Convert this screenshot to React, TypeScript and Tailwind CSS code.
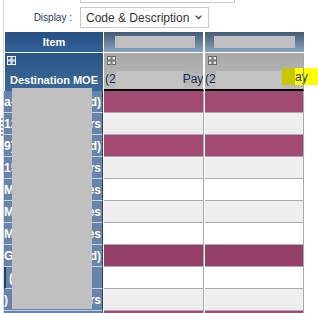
import React from 'react';

type BodyRow = { left: string; right: string; bg: string; indent?: boolean };

const ROWS: BodyRow[] = [
  { left: 'a–', right: 'd)', bg: 'bg-[#a34a73]' },
  { left: '12', right: 'rs', bg: 'bg-[#eeeeee]' },
  { left: '9)', right: 'd)', bg: 'bg-[#a34a73]' },
  { left: '15', right: 'rs', bg: 'bg-[#eeeeee]' },
  { left: 'Ma', right: 'es', bg: 'bg-white' },
  { left: 'Ma', right: 'es', bg: 'bg-[#eeeeee]' },
  { left: 'Ma', right: 'es', bg: 'bg-white' },
  { left: 'Gl', right: 'd)', bg: 'bg-[#933f68]' },
  { left: '(', right: '', bg: 'bg-white', indent: true },
  { left: ')', right: 'rs', bg: 'bg-[#eeeeee]' },
  { left: '', right: '', bg: 'bg-[#a34a73]' },
];

const GridIcon = ({ light }: { light?: boolean }) => (
  <svg width="9" height="9" viewBox="0 0 9 9" className="block">
    {[
      [0.5, 0.5],
      [5, 0.5],
      [0.5, 5],
      [5, 5],
    ].map(([x, y], i) => (
      <rect
        key={i}
        x={x}
        y={y}
        width="3.5"
        height="3.5"
        fill={light ? 'none' : '#e6e6e6'}
        stroke={light ? '#ffffff' : '#6b6b6b'}
        strokeWidth="1"
      />
    ))}
  </svg>
);

export default function App() {
  return (
    <div className="relative w-[318px] h-[313px] overflow-hidden bg-white font-['Liberation_Sans',Arial,sans-serif]">
      <div className="ml-[3px] border-l border-[#d6d6d6] h-full">
        {/* cut-off search input */}
        <div className="ml-[76px] w-[155px] h-[3px] border-x border-b border-[#cccccc]" />

        {/* display selector */}
        <div className="mt-[4px] flex items-center h-[21px]">
          <div className="w-[76px] pr-[8px] text-right text-[10px] text-[#1f3657]">Display :</div>
          <div className="w-[129px] h-[21px] border border-[#c8c8c8] flex items-center pl-[5px] pr-[6px] text-[12px] text-[#333333]">
            <span className="flex-1">Code &amp; Description</span>
            <svg width="7" height="5" viewBox="0 0 7 5">
              <path d="M0.8 0.8 L3.5 3.6 L6.2 0.8" fill="none" stroke="#555555" strokeWidth="1.6" />
            </svg>
          </div>
        </div>

        {/* table */}
        <div className="relative mt-[4px] ml-[1px] w-[299px]">
          <div className="flex gap-[1px] h-[20px]">
            <div className="w-[98px] bg-gradient-to-b from-[#274f82] to-[#33619a] text-white font-bold text-[11px] flex items-center justify-center">
              Item
            </div>
            <div className="w-[100px] border-r border-white bg-gradient-to-b from-[#435b74] to-[#8aa4c0] pt-[4px] pl-[11px]">
              <div className="w-[80px] h-[12px] bg-[#c0c0c0]" />
            </div>
            <div className="w-[99px] bg-gradient-to-b from-[#435b74] to-[#8aa4c0] pt-[4px] pl-[9px]">
              <div className="w-[81px] h-[12px] bg-[#c0c0c0]" />
            </div>
          </div>

          <div className="flex gap-[1px] mt-[1px]">
            <div className="w-[98px] h-[38px] bg-gradient-to-b from-[#2a5587] to-[#3a6799] pt-[3px] pl-[2px] flex flex-col">
              <GridIcon light />
              <div className="mt-[8px] pl-[3px] text-white font-bold text-[11px] leading-[14px]">Destination MOE</div>
            </div>
            <div className="w-[100px] h-[38px] border-r border-white border-b-2 border-b-black bg-gradient-to-b from-[#a8a8a8] to-[#bcbcbc] pt-[3px] pl-[3px] flex flex-col overflow-hidden">
              <GridIcon />
              <div className="mt-[5px] -ml-[2px] flex items-center h-[18px] text-[12px] text-[#1c2d4a] whitespace-nowrap">
                <span className="shrink-0">(2</span>
                <div className="shrink-0 w-[67px] h-[17px] bg-[#c3c3c3]" />
                <span className="shrink-0">Pay</span>
              </div>
            </div>
            <div className="w-[99px] h-[38px] border-r border-[#a8a8a8] border-b-2 border-b-black bg-gradient-to-b from-[#a8a8a8] to-[#bcbcbc] pt-[3px] pl-[3px] flex flex-col overflow-hidden">
              <GridIcon />
              <div className="mt-[5px] -ml-[3px] flex items-center h-[18px] text-[12px] text-[#1c2d4a] whitespace-nowrap">
                <span className="shrink-0">(2</span>
                <div className="shrink-0 w-[67px] h-[17px] bg-[#c3c3c3]" />
              </div>
            </div>
          </div>

          {ROWS.map((row, i) => (
            <div key={i} className="flex gap-[1px]">
              <div
                className={`-ml-[1px] w-[99px] h-[22px] bg-[#6785aa] border-b border-[#c5d2e0] border-r border-r-[#24466e] flex items-center justify-between pr-[1px] text-white font-bold text-[12px] overflow-hidden ${
                  row.indent ? 'border-l-2 border-l-[#21406a] pl-[3px]' : ''
                }`}
              >
                <span>{row.left}</span>
                <span>{row.right}</span>
              </div>
              <div className={`w-[100px] h-[22px] ${row.bg} border-b border-b-[#aaaaaa] border-r border-r-[#aaaaaa]`} />
              <div className={`w-[99px] h-[22px] ${row.bg} border-b border-b-[#aaaaaa] border-r border-r-[#aaaaaa]`} />
            </div>
          ))}

          {/* redaction over item names */}
          <div className="absolute left-[7px] top-[56px] w-[80px] h-[221px] bg-[#c0c0c0]" />
        </div>
      </div>

      {/* resize grip */}
      <div className="absolute left-[1px] top-[118px] h-[18px] border-l-2 border-dotted border-[#9a9a9a]" />

      {/* highlighted search hit */}
      <div className="absolute left-[282px] top-[68px] w-[36px] h-[17px] bg-[#ffff00] flex items-center">
        <div className="w-[13px] h-full bg-[#c8c800]" />
        <span className="text-[12px] text-[#333333] leading-none">ay</span>
        <div className="absolute left-[21px] top-0 w-[1px] h-full bg-[#9a9a70]" />
      </div>
    </div>
  );
}
